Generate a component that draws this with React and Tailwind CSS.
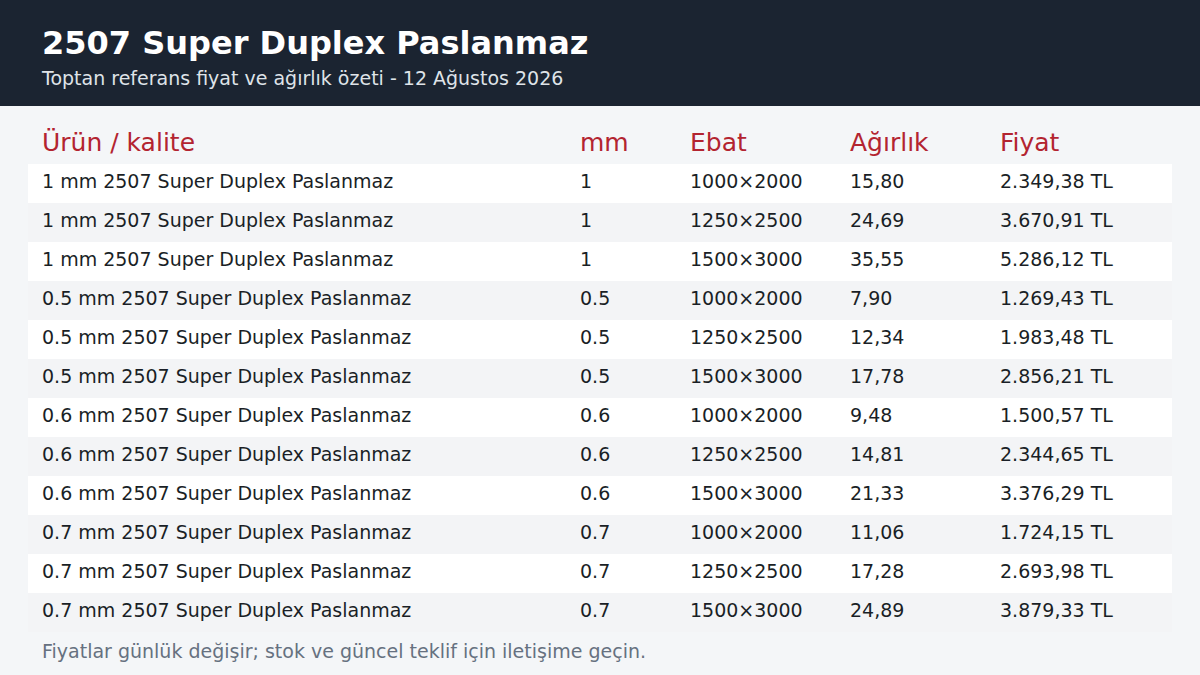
const rows = [
  ['1 mm 2507 Super Duplex Paslanmaz', '1', '1000×2000', '15,80', '2.349,38 TL'],
  ['1 mm 2507 Super Duplex Paslanmaz', '1', '1250×2500', '24,69', '3.670,91 TL'],
  ['1 mm 2507 Super Duplex Paslanmaz', '1', '1500×3000', '35,55', '5.286,12 TL'],
  ['0.5 mm 2507 Super Duplex Paslanmaz', '0.5', '1000×2000', '7,90', '1.269,43 TL'],
  ['0.5 mm 2507 Super Duplex Paslanmaz', '0.5', '1250×2500', '12,34', '1.983,48 TL'],
  ['0.5 mm 2507 Super Duplex Paslanmaz', '0.5', '1500×3000', '17,78', '2.856,21 TL'],
  ['0.6 mm 2507 Super Duplex Paslanmaz', '0.6', '1000×2000', '9,48', '1.500,57 TL'],
  ['0.6 mm 2507 Super Duplex Paslanmaz', '0.6', '1250×2500', '14,81', '2.344,65 TL'],
  ['0.6 mm 2507 Super Duplex Paslanmaz', '0.6', '1500×3000', '21,33', '3.376,29 TL'],
  ['0.7 mm 2507 Super Duplex Paslanmaz', '0.7', '1000×2000', '11,06', '1.724,15 TL'],
  ['0.7 mm 2507 Super Duplex Paslanmaz', '0.7', '1250×2500', '17,28', '2.693,98 TL'],
  ['0.7 mm 2507 Super Duplex Paslanmaz', '0.7', '1500×3000', '24,89', '3.879,33 TL'],
]

const cols = 'grid grid-cols-[538px_110px_160px_150px_1fr]'

function App() {
  return (
    <main className="h-[675px] w-[1200px] overflow-hidden bg-[#f4f6f8] font-['DejaVu_Sans',sans-serif]">
      <header className="h-[106px] bg-[#1b2431] px-[42px] pt-[23px]">
        <h1 className="text-[32px] font-bold leading-[40px] text-white">2507 Super Duplex Paslanmaz</h1>
        <p className="mt-[3px] text-[19px] leading-[24px] text-[#dfe3e8]">Toptan referans fiyat ve ağırlık özeti - 12 Ağustos 2026</p>
      </header>

      <section className="px-[28px] pt-[16px]">
        <div className={`${cols} h-[42px] items-center px-[14px] text-[25px] text-[#b32430]`}>
          <span>Ürün / kalite</span>
          <span>mm</span>
          <span>Ebat</span>
          <span>Ağırlık</span>
          <span>Fiyat</span>
        </div>
        <div>
          {rows.map((row, i) => (
            <div
              key={i}
              className={`${cols} h-[39px] items-center px-[14px] pb-[4px] text-[19px] text-[#1a1f26] ${i % 2 === 0 ? 'bg-white' : 'bg-[#f3f4f6]'}`}
            >
              {row.map((cell, j) => (
                <span key={j}>{cell}</span>
              ))}
            </div>
          ))}
        </div>
        <p className="mt-[7px] px-[14px] text-[19px] leading-[24px] text-[#667180]">
          Fiyatlar günlük değişir; stok ve güncel teklif için iletişime geçin.
        </p>
      </section>
    </main>
  )
}

export default App
